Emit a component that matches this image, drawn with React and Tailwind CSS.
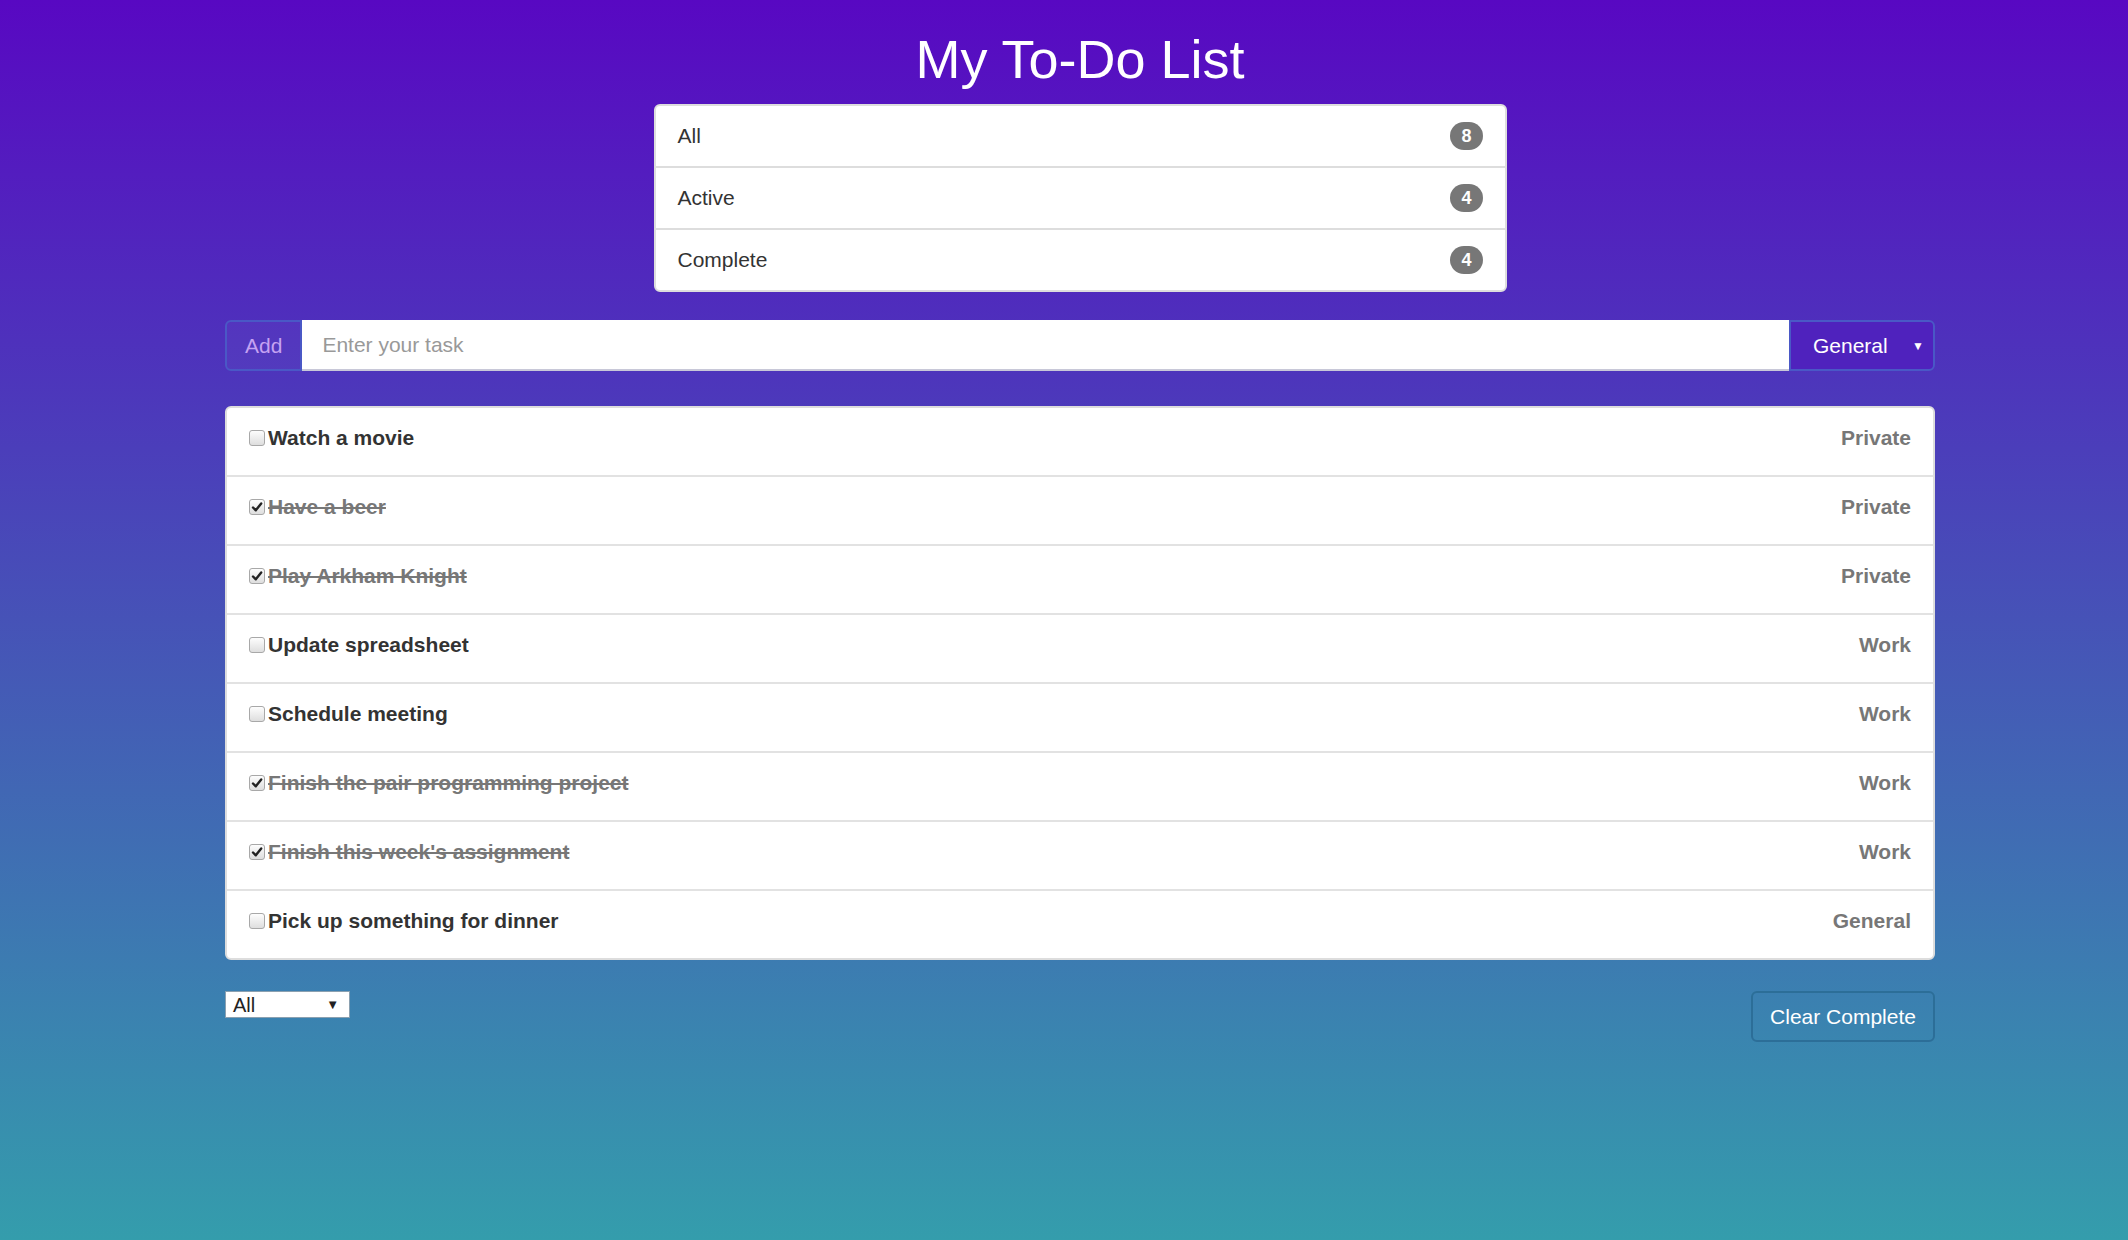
import React from 'react';

const filters = [
  { label: 'All', count: 8 },
  { label: 'Active', count: 4 },
  { label: 'Complete', count: 4 },
];

const tasks = [
  { text: 'Watch a movie', done: false, cat: 'Private' },
  { text: 'Have a beer', done: true, cat: 'Private' },
  { text: 'Play Arkham Knight', done: true, cat: 'Private' },
  { text: 'Update spreadsheet', done: false, cat: 'Work' },
  { text: 'Schedule meeting', done: false, cat: 'Work' },
  { text: 'Finish the pair programming project', done: true, cat: 'Work' },
  { text: "Finish this week's assignment", done: true, cat: 'Work' },
  { text: 'Pick up something for dinner', done: false, cat: 'General' },
];

function Checkbox({ checked }) {
  return (
    <span className="flex items-center justify-center w-[16px] h-[16px] rounded-[3px] border border-[#a8a8a8] bg-gradient-to-b from-[#fdfdfd] to-[#dedede] shrink-0">
      {checked && (
        <svg viewBox="0 0 12 12" className="w-[12px] h-[12px]">
          <path d="M2 6.5 L4.8 9.3 L10.2 2.4" fill="none" stroke="#222" strokeWidth="2.4" strokeLinecap="round" strokeLinejoin="round" />
        </svg>
      )}
    </span>
  );
}

export default function App() {
  return (
    <div
      className="h-[1240px] overflow-hidden w-full bg-[linear-gradient(to_bottom,#5808c2,#349dac)] text-[21px] leading-[30px] text-[#333]"
      style={{ fontFamily: '"Liberation Sans", Arial, sans-serif' }}
    >
      <div className="w-[1710px] ml-[225px]">
        {/* Title */}
        <h1 className="pt-[30px] mb-[15px] text-center text-white text-[54px] leading-[59px] font-normal">
          My To-Do List
        </h1>

        {/* Filter counts */}
        <div className="w-[853px] mx-auto bg-white rounded-[6px] border-2 border-[#ddd] overflow-hidden">
          {filters.map((f, i) => (
            <div
              key={f.label}
              className={`flex items-center justify-between px-[22px] py-[15px] ${i > 0 ? 'border-t-2 border-[#ddd]' : ''}`}
            >
              <span>{f.label}</span>
              <span className="bg-[#777] text-white font-bold text-[18px] leading-none px-[11px] py-[5px] rounded-[15px]">
                {f.count}
              </span>
            </div>
          ))}
        </div>

        {/* Add task row */}
        <div className="flex mt-[28px] h-[51px]">
          <button className="px-[18px] bg-white/[0.03] border-2 border-[#4a58c6] rounded-l-[6px] text-[#c5a2f2]">
            Add
          </button>
          <div className="flex-1 flex items-center bg-white border-b-2 border-[#c8c8d8] px-[20px] text-[#999]">
            Enter your task
          </div>
          <div className="w-[146px] flex items-center justify-between pl-[22px] pr-[9px] bg-[#4f22bd] border-2 border-[#4a58c6] rounded-r-[6px] text-white">
            <span>General</span>
            <span className="text-[12px] leading-none">▼</span>
          </div>
        </div>

        {/* Task list */}
        <div className="mt-[35px] bg-white rounded-[6px] border-2 border-[#ddd] overflow-hidden">
          {tasks.map((t, i) => (
            <div
              key={t.text}
              className={`flex items-start justify-between px-[22px] pt-[15px] pb-[21px] ${i > 0 ? 'border-t-2 border-[#e2e2e2]' : ''}`}
            >
              <label className="flex items-center gap-[3px] font-bold leading-[30px] mb-[1px]">
                <Checkbox checked={t.done} />
                <span className={t.done ? 'line-through text-[#777]' : 'text-[#333]'}>{t.text}</span>
              </label>
              <span className="font-bold text-[#777] leading-[30px]">{t.cat}</span>
            </div>
          ))}
        </div>

        {/* Footer controls */}
        <div className="flex justify-between items-start mt-[31px]">
          <div className="w-[125px] h-[27px] flex items-center justify-between bg-white border border-[#8aa0b0] pl-[7px] pr-[10px] text-[20px] text-[#222]">
            <span>All</span>
            <span className="text-[13px] leading-none">▼</span>
          </div>
          <button className="w-[184px] h-[51px] border-2 border-[#2c6e98] rounded-[6px] text-white">
            Clear Complete
          </button>
        </div>
      </div>
    </div>
  );
}
